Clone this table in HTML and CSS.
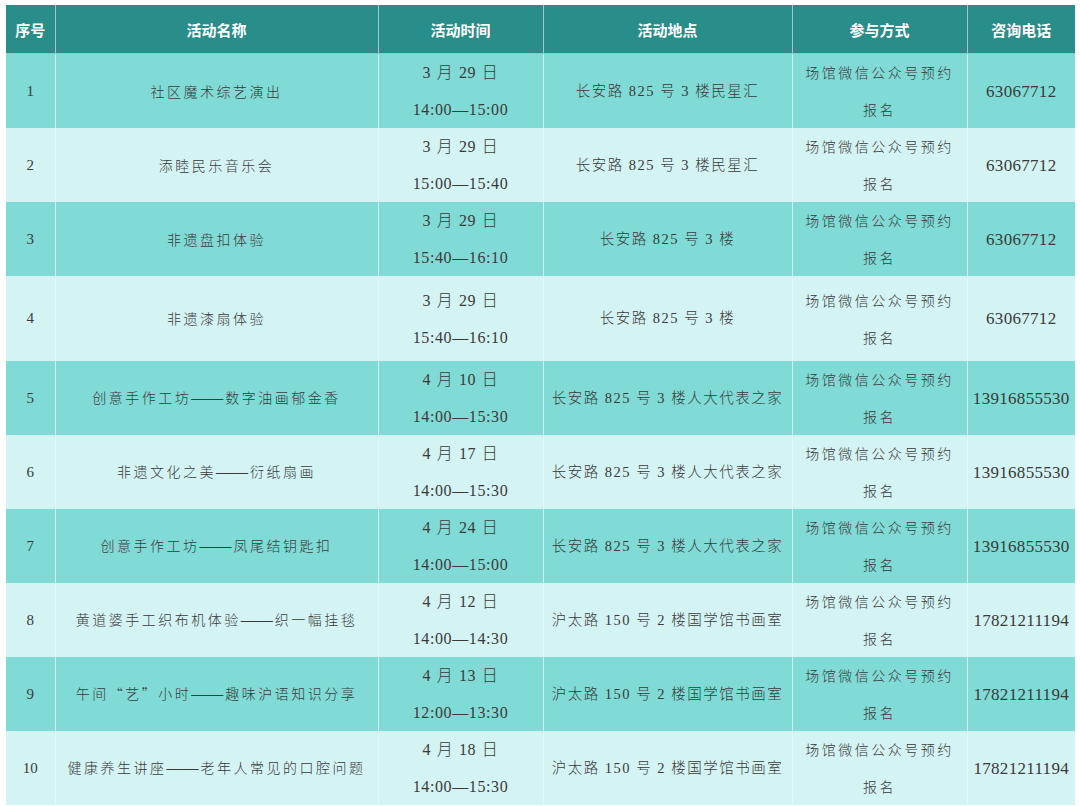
FILE: index.html
```html
<!DOCTYPE html>
<html lang="zh-CN">
<head>
<meta charset="utf-8">
<title>活动表</title>
<link rel="stylesheet" href="styles.css">
</head>
<body>
<table class="schedule">
  <colgroup>
    <col class="c-no"><col class="c-name"><col class="c-time"><col class="c-place"><col class="c-way"><col class="c-tel">
  </colgroup>
  <thead>
    <tr><th>序号</th><th>活动名称</th><th>活动时间</th><th>活动地点</th><th>参与方式</th><th>咨询电话</th></tr>
  </thead>
  <tbody>
    <tr class="odd"><td>1</td><td class="cjk">社区魔术综艺演出</td><td class="time">3 月 29 日<br>14:00—15:00</td><td class="place">长安路 825 号 3 楼民星汇</td><td class="cjk">场馆微信公众号预约报名</td><td>63067712</td></tr>
    <tr class="even"><td>2</td><td class="cjk">添睦民乐音乐会</td><td class="time">3 月 29 日<br>15:00—15:40</td><td class="place">长安路 825 号 3 楼民星汇</td><td class="cjk">场馆微信公众号预约报名</td><td>63067712</td></tr>
    <tr class="odd"><td>3</td><td class="cjk">非遗盘扣体验</td><td class="time">3 月 29 日<br>15:40—16:10</td><td class="place">长安路 825 号 3 楼</td><td class="cjk">场馆微信公众号预约报名</td><td>63067712</td></tr>
    <tr class="even tall"><td>4</td><td class="cjk">非遗漆扇体验</td><td class="time">3 月 29 日<br>15:40—16:10</td><td class="place">长安路 825 号 3 楼</td><td class="cjk">场馆微信公众号预约报名</td><td>63067712</td></tr>
    <tr class="odd"><td>5</td><td>创意手作工坊<span class="dash">——</span>数字油画郁金香</td><td class="time">4 月 10 日<br>14:00—15:30</td><td class="place">长安路 825 号 3 楼人大代表之家</td><td class="cjk">场馆微信公众号预约报名</td><td>13916855530</td></tr>
    <tr class="even"><td>6</td><td>非遗文化之美<span class="dash">——</span>衍纸扇画</td><td class="time">4 月 17 日<br>14:00—15:30</td><td class="place">长安路 825 号 3 楼人大代表之家</td><td class="cjk">场馆微信公众号预约报名</td><td>13916855530</td></tr>
    <tr class="odd"><td>7</td><td>创意手作工坊<span class="dash">——</span>凤尾结钥匙扣</td><td class="time">4 月 24 日<br>14:00—15:00</td><td class="place">长安路 825 号 3 楼人大代表之家</td><td class="cjk">场馆微信公众号预约报名</td><td>13916855530</td></tr>
    <tr class="even"><td>8</td><td>黄道婆手工织布机体验<span class="dash">——</span>织一幅挂毯</td><td class="time">4 月 12 日<br>14:00—14:30</td><td class="place">沪太路 150 号 2 楼国学馆书画室</td><td class="cjk">场馆微信公众号预约报名</td><td>17821211194</td></tr>
    <tr class="odd"><td>9</td><td>午间<span class="cjk">“艺”</span>小时<span class="dash">——</span>趣味沪语知识分享</td><td class="time">4 月 13 日<br>12:00—13:30</td><td class="place">沪太路 150 号 2 楼国学馆书画室</td><td class="cjk">场馆微信公众号预约报名</td><td>17821211194</td></tr>
    <tr class="even"><td>10</td><td>健康养生讲座<span class="dash">——</span>老年人常见的口腔问题</td><td class="time">4 月 18 日<br>14:00—15:30</td><td class="place">沪太路 150 号 2 楼国学馆书画室</td><td class="cjk">场馆微信公众号预约报名</td><td>17821211194</td></tr>
  </tbody>
</table>
</body>
</html>
```
FILE: styles.css
```css
html, body {
  margin: 0;
  padding: 0;
  background: #ffffff;
}
body {
  padding: 5px 5px 6px 6px;
}
.schedule {
  width: 1069px;
  border-collapse: collapse;
  table-layout: fixed;
  font-family: "Liberation Serif", "Noto Sans CJK SC", serif;
  color: #3a3a3a;
}
.c-no { width: 49px; }
.c-name { width: 323px; }
.c-time { width: 165px; }
.c-place { width: 249px; }
.c-way { width: 175px; }
.c-tel { width: 108px; }

.schedule th {
  height: 48px;
  padding: 0;
  background: #298d89;
  color: #ffffff;
  font-family: "Noto Sans CJK SC", sans-serif;
  font-weight: 700;
  font-size: 15px;
  text-align: center;
  border-left: 1px solid rgba(255, 255, 255, 0.55);
  border-bottom: 1px solid rgba(255, 255, 255, 0.5);
}
.schedule th:first-child { border-left: none; }

.schedule td {
  padding: 0 12px;
  text-align: center;
  vertical-align: middle;
  font-size: 14px;
  font-weight: 300;
  line-height: 37px;
  letter-spacing: 2.5px;
  border-left: 1px solid rgba(255, 255, 255, 0.6);
  white-space: normal;
}
.schedule td .dash {
  letter-spacing: 0;
  font-size: 16px;
  margin-right: 2px;
}
.schedule td.time {
  padding: 0;
  font-size: 16px;
  letter-spacing: 0.6px;
  word-spacing: 1px;
}
.schedule td.place {
  padding: 0;
  font-size: 14.5px;
  letter-spacing: 1.5px;
  white-space: nowrap;
}
.schedule td:first-child {
  border-left: none;
  padding: 0;
  font-size: 15px;
  letter-spacing: 0;
}
.schedule td:last-child {
  padding: 0;
  font-size: 17px;
  letter-spacing: 0.3px;
}
.schedule td .cjk, .schedule td.cjk {
  font-family: "Noto Sans CJK SC", sans-serif;
}
.schedule tr.odd td { background: #80dad6; }
.schedule tr.even td { background: #d4f3f3; border-left-color: rgba(255, 255, 255, 0.35); }
.schedule tbody tr { height: 73.5px; }
.schedule tbody tr.tall { height: 85px; }
```
